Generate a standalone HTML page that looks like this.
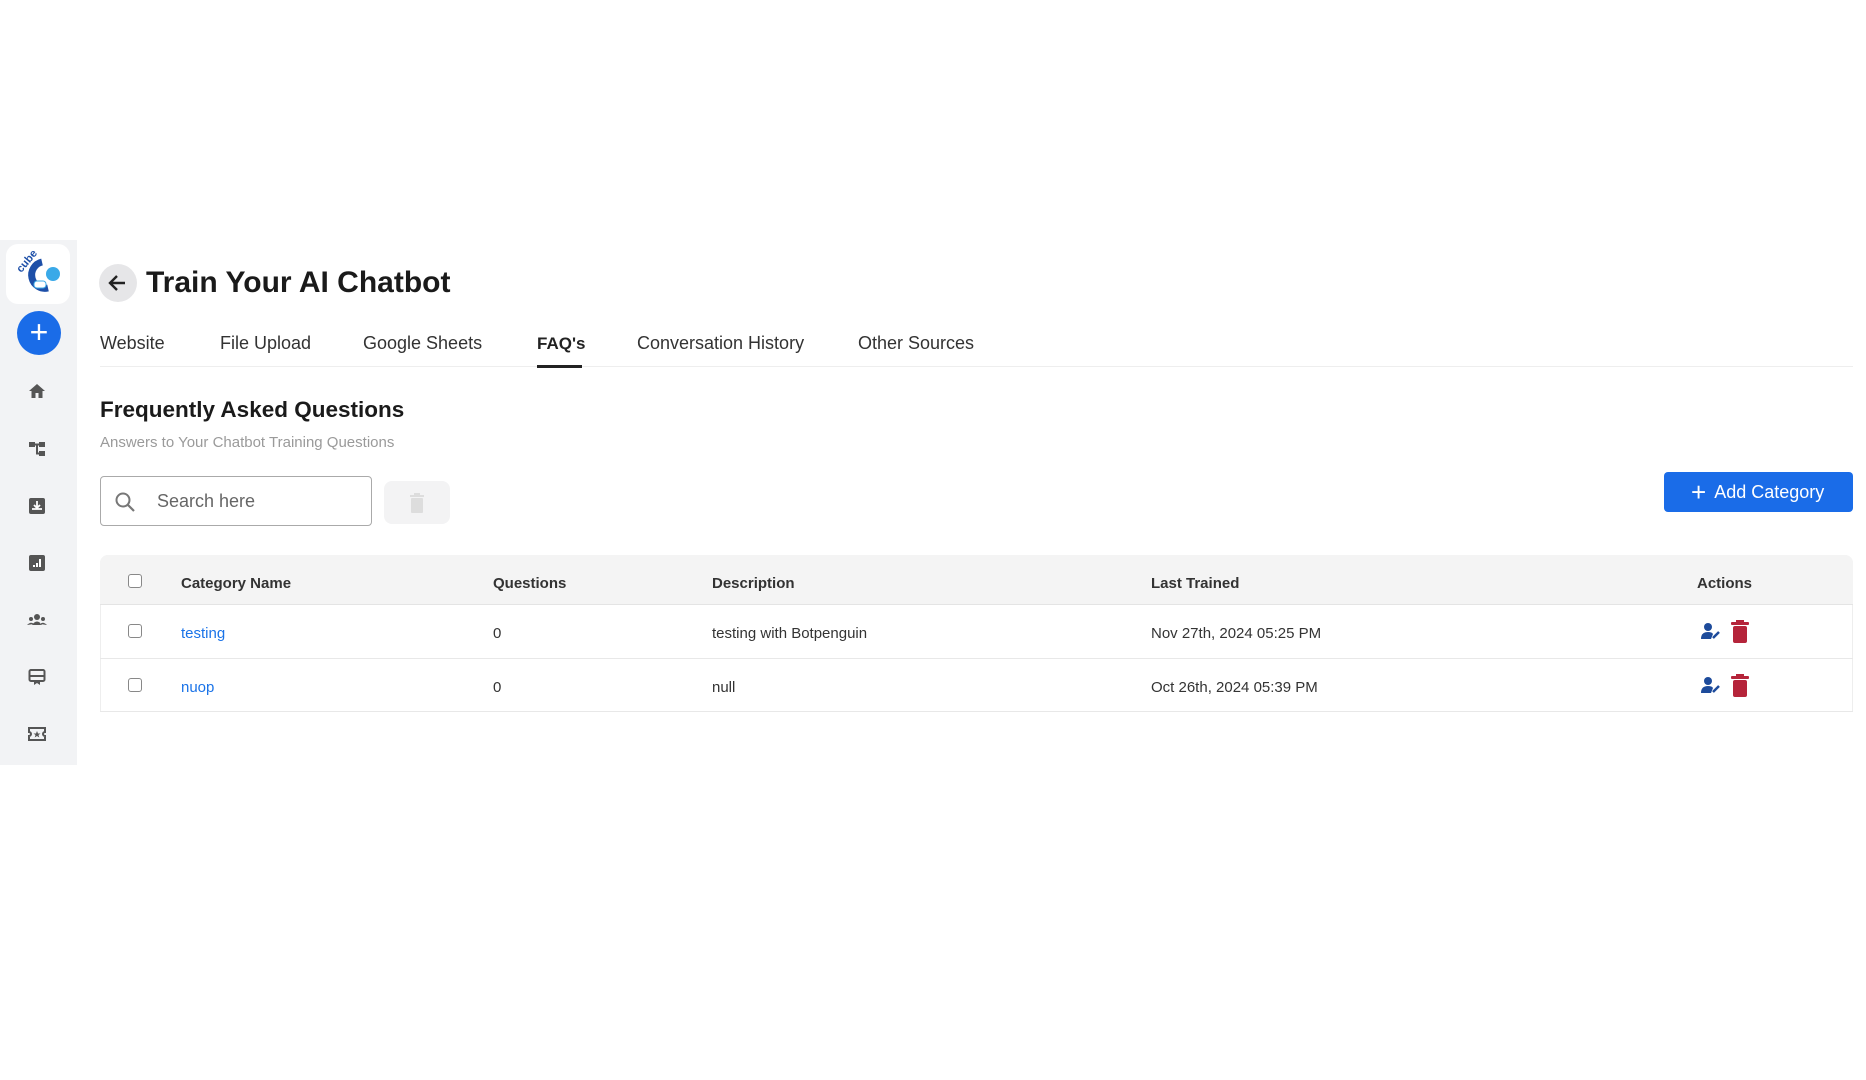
<!DOCTYPE html>
<html><head><meta charset="utf-8"><style>
*{margin:0;padding:0;box-sizing:border-box}
body{width:1866px;height:1080px;background:#fff;font-family:"Liberation Sans",sans-serif;color:#222;position:relative;overflow:hidden}
.a{position:absolute;white-space:nowrap}
.side{left:0;top:240px;width:77px;height:525px;background:#f2f3f5}
.ic{position:absolute;left:27px;width:20px;height:20px}
.tab{font-size:18px;color:#333;top:333px}
.th{font-size:15px;font-weight:bold;color:#333}
.td{font-size:15px;color:#333}
.cb{position:absolute;left:128px;width:14px;height:14px;border:1.5px solid #888;border-radius:3px;background:#fff}
</style></head><body>
<div class="a side"></div>
<div class="a" style="left:6px;top:244px;width:64px;height:60px;background:#fff;border-radius:12px"></div>
<svg class="a" style="left:12px;top:248px" width="52" height="52" viewBox="0 0 52 52">
<text x="4" y="22" font-size="11" font-weight="bold" fill="#1d4fa8" transform="rotate(-50 10 18)" font-family="Liberation Sans">cube</text>
<path d="M30 14 A13 13 0 1 0 36 40" stroke="#1d4fa8" stroke-width="7" fill="none"/>
<circle cx="41" cy="26" r="7" fill="#3aa9e8"/><rect x="22" y="33" width="12" height="7" rx="3" fill="#fff" stroke="#3aa9e8"/>
</svg>
<div class="a" style="left:17px;top:311px;width:44px;height:44px;border-radius:50%;background:#1a6ce8;color:#fff;font-size:32px;line-height:42px;text-align:center">+</div>
<svg class="ic" style="top:381px" viewBox="0 0 20 20"><path d="M10 3 L2 10 H4.5 V17 H8.5 V12 H11.5 V17 H15.5 V10 H18 Z" fill="#555"/></svg>
<svg class="ic" style="top:439px" viewBox="0 0 20 20"><rect x="2" y="3" width="6" height="5" fill="#555"/><rect x="12" y="3" width="6" height="5" fill="#555"/><rect x="12" y="12" width="6" height="5" fill="#555"/><path d="M8 5.5H12 M10 5.5V14.5H12" stroke="#555" stroke-width="2" fill="none"/></svg>
<svg class="ic" style="top:496px" viewBox="0 0 20 20"><rect x="2" y="2" width="16" height="16" rx="2" fill="#555"/><path d="M10 5V11 M7 9L10 12L13 9 M5 13H15" stroke="#fff" stroke-width="1.8" fill="none"/></svg>
<svg class="ic" style="top:553px" viewBox="0 0 20 20"><rect x="2" y="2" width="16" height="16" rx="2" fill="#555"/><path d="M7 14V12 M10 14V10 M13 14V6" stroke="#fff" stroke-width="2"/></svg>
<svg class="ic" style="top:610px" viewBox="0 0 20 20"><circle cx="10" cy="7" r="3" fill="#555"/><circle cx="4" cy="9" r="2" fill="#555"/><circle cx="16" cy="9" r="2" fill="#555"/><path d="M5 15Q10 8 15 15Z M0 15Q4 11 7 14Z M20 15Q16 11 13 14Z" fill="#555"/></svg>
<svg class="ic" style="top:667px" viewBox="0 0 20 20"><rect x="2.5" y="3" width="15" height="11" rx="1.5" stroke="#555" stroke-width="2" fill="none"/><rect x="2.5" y="8" width="15" height="2" fill="#555"/><path d="M7 14V18L10 16L13 18V14Z" fill="#555"/></svg>
<svg class="ic" style="top:724px" viewBox="0 0 20 20"><path d="M2 4H18V8A2 2 0 0 0 18 12V16H2V12A2 2 0 0 0 2 8Z" stroke="#555" stroke-width="2" fill="none"/><path d="M10 7L11 9.5H13.5L11.5 11L12.3 13.5L10 12L7.7 13.5L8.5 11L6.5 9.5H9Z" fill="#555"/></svg>

<div class="a" style="left:99px;top:264px;width:38px;height:38px;border-radius:50%;background:#e6e6e8"></div>
<svg class="a" style="left:107px;top:272px" width="22" height="22" viewBox="0 0 22 22"><path d="M18 11H4 M10 4L3 11L10 18" stroke="#222" stroke-width="2.4" fill="none"/></svg>
<div class="a" style="left:146px;top:266px;font-size:30px;font-weight:bold;color:#1a1a1a">Train Your AI Chatbot</div>

<div class="a tab" style="left:100px">Website</div>
<div class="a tab" style="left:220px">File Upload</div>
<div class="a tab" style="left:363px">Google Sheets</div>
<div class="a tab" style="left:537px;font-weight:bold;color:#222;font-size:17px;top:334px">FAQ's</div>
<div class="a tab" style="left:637px">Conversation History</div>
<div class="a tab" style="left:858px">Other Sources</div>
<div class="a" style="left:100px;top:366px;width:1753px;height:1px;background:#eee"></div>
<div class="a" style="left:537px;top:365px;width:45px;height:3px;background:#222"></div>

<div class="a" style="left:100px;top:397px;font-size:22.5px;font-weight:bold;color:#1a1a1a">Frequently Asked Questions</div>
<div class="a" style="left:100px;top:434px;font-size:15px;color:#9a9a9a">Answers to Your Chatbot Training Questions</div>

<div class="a" style="left:100px;top:476px;width:272px;height:50px;border:1px solid #aaa;border-radius:4px"></div>
<svg class="a" style="left:114px;top:491px" width="22" height="22" viewBox="0 0 22 22"><circle cx="9" cy="9" r="6.5" stroke="#777" stroke-width="2" fill="none"/><path d="M14 14L20 20" stroke="#777" stroke-width="2.2"/></svg>
<div class="a" style="left:157px;top:491px;font-size:18px;color:#666">Search here</div>
<div class="a" style="left:384px;top:481px;width:66px;height:43px;border-radius:8px;background:#f3f3f4"></div>
<svg class="a" style="left:409px;top:492px" width="16" height="22" viewBox="0 0 16 22"><rect x="1" y="3" width="14" height="2" fill="#ddd"/><rect x="5" y="1" width="6" height="2" fill="#ddd"/><rect x="2" y="6" width="12" height="15" rx="1" fill="#ddd"/></svg>

<div class="a" style="left:1664px;top:472px;width:189px;height:40px;border-radius:4px;background:#1a6ce8;color:#fff;font-size:18px;line-height:40px;padding-left:27px">
<span style="font-size:26px;vertical-align:-3px;margin-right:8px">+</span>Add Category</div>

<div class="a" style="left:100px;top:555px;width:1753px;height:157px;border:1px solid #eee;border-radius:8px 8px 0 0"></div>
<div class="a" style="left:100px;top:555px;width:1753px;height:50px;background:#f4f4f4;border-radius:8px 8px 0 0;border-bottom:1px solid #e4e4e4"></div>
<div class="a" style="left:100px;top:658px;width:1753px;height:1px;background:#e8e8e8"></div>
<div class="a" style="left:100px;top:711px;width:1753px;height:1px;background:#e8e8e8"></div>
<div class="cb" style="top:574px"></div>
<div class="cb" style="top:624px"></div>
<div class="cb" style="top:678px"></div>
<div class="a th" style="left:181px;top:575px">Category Name</div>
<div class="a th" style="left:493px;top:575px">Questions</div>
<div class="a th" style="left:712px;top:575px">Description</div>
<div class="a th" style="left:1151px;top:575px">Last Trained</div>
<div class="a th" style="left:1697px;top:575px">Actions</div>

<div class="a td" style="left:181px;top:625px;color:#1a73e8">testing</div>
<div class="a td" style="left:493px;top:625px">0</div>
<div class="a td" style="left:712px;top:625px">testing with Botpenguin</div>
<div class="a td" style="left:1151px;top:625px">Nov 27th, 2024 05:25 PM</div>
<div class="a td" style="left:181px;top:679px;color:#1a73e8">nuop</div>
<div class="a td" style="left:493px;top:679px">0</div>
<div class="a td" style="left:712px;top:679px">null</div>
<div class="a td" style="left:1151px;top:679px">Oct 26th, 2024 05:39 PM</div>

<svg class="a" style="left:1701px;top:622px" width="20" height="18" viewBox="0 0 20 18"><circle cx="7" cy="5" r="4" fill="#1d4b9b"/><path d="M0 17Q0 10 7 10Q11 10 12 12L10 17Z" fill="#1d4b9b"/><path d="M12 16L18 10" stroke="#1d4b9b" stroke-width="2.5"/></svg>
<svg class="a" style="left:1731px;top:620px" width="18" height="23" viewBox="0 0 18 23"><rect x="0" y="2" width="18" height="3" rx="1" fill="#b5243a"/><rect x="5" y="0" width="8" height="3" fill="#b5243a"/><rect x="2" y="6" width="14" height="17" rx="2" fill="#b5243a"/></svg>
<svg class="a" style="left:1701px;top:676px" width="20" height="18" viewBox="0 0 20 18"><circle cx="7" cy="5" r="4" fill="#1d4b9b"/><path d="M0 17Q0 10 7 10Q11 10 12 12L10 17Z" fill="#1d4b9b"/><path d="M12 16L18 10" stroke="#1d4b9b" stroke-width="2.5"/></svg>
<svg class="a" style="left:1731px;top:674px" width="18" height="23" viewBox="0 0 18 23"><rect x="0" y="2" width="18" height="3" rx="1" fill="#b5243a"/><rect x="5" y="0" width="8" height="3" fill="#b5243a"/><rect x="2" y="6" width="14" height="17" rx="2" fill="#b5243a"/></svg>
</body></html>
